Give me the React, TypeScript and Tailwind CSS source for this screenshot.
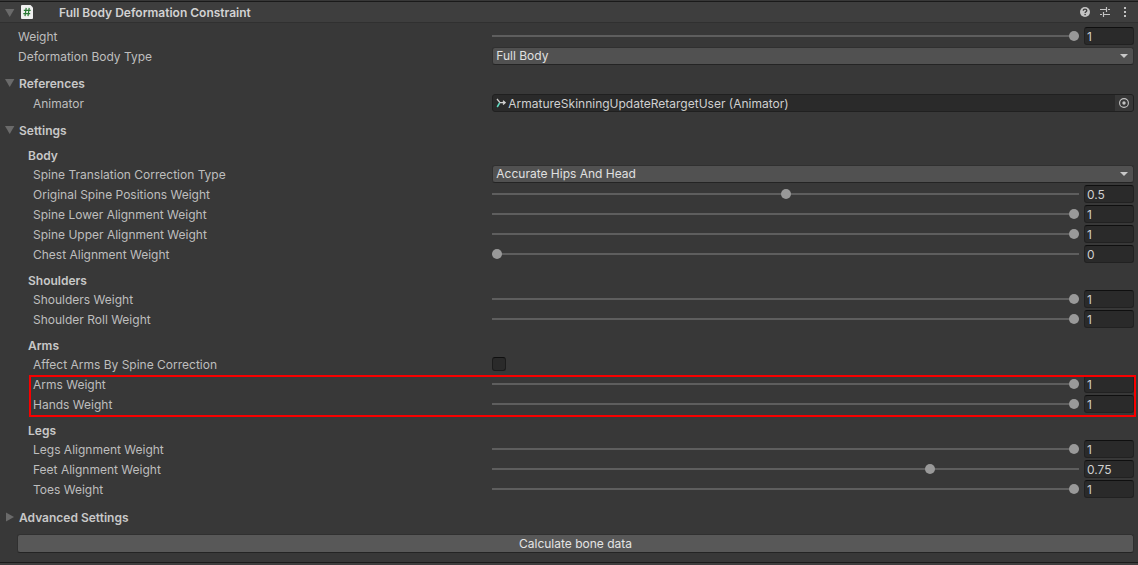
import { useState, type ReactNode } from "react";

const FIELD =
  "h-[18px] rounded-[3px] border border-[#212121] border-t-[#0f0f0f] bg-[#2a2a2a] text-[#d0d0d0] outline-none";

function Label({ id, top, children }: { id: string; top?: boolean; children: ReactNode }) {
  return (
    <label
      htmlFor={id}
      className={`w-[calc(45%-18px)] shrink-0 truncate pt-px leading-[18px] ${top ? "pl-[18px]" : "pl-[33px]"}`}
    >
      {children}
    </label>
  );
}

function Row({ children }: { children: ReactNode }) {
  return <div className="flex h-[18px] items-center pr-1">{children}</div>;
}

function SliderRow({ id, label, initial, top }: { id: string; label: string; initial: number; top?: boolean }) {
  const [value, setValue] = useState(String(initial));
  return (
    <Row>
      <Label id={id} top={top}>
        {label}
      </Label>
      <input
        type="range"
        aria-label={`${label} slider`}
        min={0}
        max={1}
        step={0.01}
        value={Number(value) || 0}
        onChange={(e) => setValue(e.target.value)}
        className="m-0 h-[18px] min-w-0 flex-1 appearance-none bg-transparent outline-none [&::-webkit-slider-runnable-track]:h-0.5 [&::-webkit-slider-runnable-track]:bg-[#5e5e5e] [&::-webkit-slider-thumb]:-mt-1 [&::-webkit-slider-thumb]:size-2.5 [&::-webkit-slider-thumb]:appearance-none [&::-webkit-slider-thumb]:rounded-full [&::-webkit-slider-thumb]:bg-[#999999]"
      />
      <input
        id={id}
        type="text"
        value={value}
        onChange={(e) => setValue(e.target.value)}
        className={`${FIELD} ml-[5px] w-[50px] px-0.5 pt-px`}
      />
    </Row>
  );
}

function SelectRow({ id, label, options, top }: { id: string; label: string; options: string[]; top?: boolean }) {
  return (
    <Row>
      <Label id={id} top={top}>
        {label}
      </Label>
      <div className="relative min-w-0 flex-1">
        <select
          id={id}
          className="block h-[18px] w-full appearance-none rounded-[3px] border border-[#303030] border-b-[#242424] bg-[#515151] pl-[3px] leading-4 text-[#e0e0e0] outline-none"
        >
          {options.map((o) => (
            <option key={o}>{o}</option>
          ))}
        </select>
        <svg className="pointer-events-none absolute top-[7px] right-1.5 h-1 w-2" viewBox="0 0 8 4" fill="#c9c9c9">
          <path d="M0 0h8L4 4z" />
        </svg>
      </div>
    </Row>
  );
}

function Triangle({ open }: { open: boolean }) {
  return (
    <svg className="size-2.5 shrink-0" viewBox="0 0 10 10" fill="#6a6a6a">
      <path d={open ? "M0 1h9.4L4.7 9z" : "M1 0.5v9L9 5z"} />
    </svg>
  );
}

function Foldout({ title, open, onToggle }: { title: string; open: boolean; onToggle: () => void }) {
  return (
    <button
      type="button"
      aria-expanded={open}
      onClick={onToggle}
      className="flex h-[18px] items-center gap-1 pl-[5px] font-semibold text-[#c8c8c8]"
    >
      <Triangle open={open} />
      <span className="pt-0.5">{title}</span>
    </button>
  );
}

function Group({ title, children }: { title: string; children: ReactNode }) {
  return (
    <section>
      <h3 className="h-[18px] pl-7 leading-[18px] font-semibold text-[#c8c8c8]">{title}</h3>
      <div className="flex flex-col gap-0.5">{children}</div>
    </section>
  );
}

function ScriptIcon() {
  return (
    <svg className="ml-1.5 h-3.5 w-3 shrink-0" viewBox="0 0 12 14">
      <path d="M1 0h8.5L12 2.5V13a1 1 0 0 1-1 1H1a1 1 0 0 1-1-1V1a1 1 0 0 1 1-1z" fill="#f0f0f0" />
      <path d="M5.2 2.8L4 11.2M8.2 2.8L7 11.2M2.8 5.4h6.9M2.3 8.6h6.9" stroke="#2b7a35" strokeWidth="1.2" fill="none" />
    </svg>
  );
}

function HeaderButton({ label, children }: { label: string; children: ReactNode }) {
  return (
    <button type="button" aria-label={label} className="flex size-5 items-center justify-center">
      {children}
    </button>
  );
}

export default function App() {
  const [expanded, setExpanded] = useState(true);
  const [references, setReferences] = useState(true);
  const [settings, setSettings] = useState(true);
  const [advanced, setAdvanced] = useState(false);

  return (
    <main className="min-h-screen bg-[#383838] font-['Inter',sans-serif] text-[12px] text-[#bebebe]">
      <div className="h-px bg-[#383838]" />
      <header className="flex h-[22px] items-center border-t border-b border-t-[#1a1a1a] border-b-[#303030] bg-[#3e3e3e] pr-[3px] pl-[5px]">
        <button
          type="button"
          aria-label="Toggle component"
          aria-expanded={expanded}
          onClick={() => setExpanded(!expanded)}
          className="pt-px"
        >
          <Triangle open={expanded} />
        </button>
        <ScriptIcon />
        <h2 className="ml-[26px] flex-1 truncate pt-0.5 font-semibold text-[#d2d2d2]">
          Full Body Deformation Constraint
        </h2>
        <HeaderButton label="Help">
          <svg className="size-2.5" viewBox="0 0 10 10">
            <circle cx="5" cy="5" r="5" fill="#c4c4c4" />
            <path
              d="M3.3 3.8C3.3 2.7 4 2.1 5 2.1s1.8.6 1.8 1.5c0 1.2-1.7 1.3-1.7 2.5"
              fill="none"
              stroke="#3e3e3e"
              strokeWidth="1.3"
            />
            <rect x="4.4" y="6.9" width="1.4" height="1.3" fill="#3e3e3e" />
          </svg>
        </HeaderButton>
        <HeaderButton label="Presets">
          <svg className="h-2.5 w-2.5" viewBox="0 0 10 10" fill="none" stroke="#c4c4c4">
            <path d="M0 2.5h6.5M6.5 0v5M8 2.5h2M0 7.5h2M3.5 5v5M3.5 7.5H10" strokeWidth="1.2" />
          </svg>
        </HeaderButton>
        <HeaderButton label="More options">
          <svg className="h-2.5 w-0.5" viewBox="0 0 2 10" fill="#c4c4c4">
            <path d="M0 0h2v2H0zM0 4h2v2H0zM0 8h2v2H0z" />
          </svg>
        </HeaderButton>
      </header>

      {expanded && (
        <div className="flex flex-col pt-1">
          <div className="flex flex-col gap-0.5">
            <SliderRow id="weight" label="Weight" initial={1} top />
            <SelectRow id="body-type" label="Deformation Body Type" options={["Full Body", "Upper Body"]} top />
          </div>

          <section className="mt-[9px] flex flex-col gap-0.5">
            <Foldout title="References" open={references} onToggle={() => setReferences(!references)} />
            {references && (
              <Row>
                <Label id="animator">Animator</Label>
                <div className="flex h-[18px] min-w-0 flex-1 items-center rounded-[3px] border border-[#202020] bg-[#2a2a2a]">
                  <svg className="ml-[3px] h-2.5 w-2.5 shrink-0" viewBox="0 0 10 10" fill="none">
                    <path d="M1 1l3 3.7h5.2M7 2.8l2.2 1.9L7 6.6" stroke="#d0d0d0" strokeWidth="1.3" />
                    <path d="M3.6 5L1.2 9" stroke="#5fd9c0" strokeWidth="1.5" />
                  </svg>
                  <input
                    id="animator"
                    type="text"
                    readOnly
                    value="ArmatureSkinningUpdateRetargetUser (Animator)"
                    className="ml-0.5 min-w-0 flex-1 bg-transparent pt-px text-[#d0d0d0] outline-none"
                  />
                  <button
                    type="button"
                    aria-label="Select object"
                    className="flex h-4 w-[18px] items-center justify-center rounded-r-[2px] bg-[#373737]"
                  >
                    <svg className="size-2.5" viewBox="0 0 10 10" fill="none">
                      <circle cx="5" cy="5" r="4.4" stroke="#c4c4c4" strokeWidth="1.1" />
                      <circle cx="5" cy="5" r="1.7" fill="#c4c4c4" />
                    </svg>
                  </button>
                </div>
              </Row>
            )}
          </section>

          <section className="mt-[9px] flex flex-col gap-2">
            <Foldout title="Settings" open={settings} onToggle={() => setSettings(!settings)} />
            {settings && (
              <div className="flex flex-col gap-[9px]">
                <Group title="Body">
                  <SelectRow
                    id="spine-correction"
                    label="Spine Translation Correction Type"
                    options={["Accurate Hips And Head", "Accurate Head", "Accurate Hips", "None"]}
                  />
                  <SliderRow id="spine-original" label="Original Spine Positions Weight" initial={0.5} />
                  <SliderRow id="spine-lower" label="Spine Lower Alignment Weight" initial={1} />
                  <SliderRow id="spine-upper" label="Spine Upper Alignment Weight" initial={1} />
                  <SliderRow id="chest" label="Chest Alignment Weight" initial={0} />
                </Group>
                <Group title="Shoulders">
                  <SliderRow id="shoulders" label="Shoulders Weight" initial={1} />
                  <SliderRow id="shoulder-roll" label="Shoulder Roll Weight" initial={1} />
                </Group>
                <Group title="Arms">
                  <Row>
                    <Label id="affect-arms">Affect Arms By Spine Correction</Label>
                    <input
                      id="affect-arms"
                      type="checkbox"
                      className="size-3.5 appearance-none rounded-[3px] border border-[#1c1c1c] border-t-[#0f0f0f] bg-[#2a2a2a] checked:bg-[#999999]"
                    />
                  </Row>
                  <div className="relative flex flex-col gap-0.5">
                    <SliderRow id="arms" label="Arms Weight" initial={1} />
                    <SliderRow id="hands" label="Hands Weight" initial={1} />
                    <div className="pointer-events-none absolute top-0 right-0.5 -bottom-1 left-[29px] border-2 border-[#f80000]" />
                  </div>
                </Group>
                <Group title="Legs">
                  <SliderRow id="legs" label="Legs Alignment Weight" initial={1} />
                  <SliderRow id="feet" label="Feet Alignment Weight" initial={0.75} />
                  <SliderRow id="toes" label="Toes Weight" initial={1} />
                </Group>
              </div>
            )}
          </section>

          <section className="mt-2.5">
            <Foldout title="Advanced Settings" open={advanced} onToggle={() => setAdvanced(!advanced)} />
          </section>

          <div className="mt-2 pr-1 pl-[17px]">
            <button
              type="button"
              className="block h-[19px] w-full rounded-[3px] border border-[#303030] border-b-[#242424] bg-[#585858] leading-[17px] text-[#e4e4e4]"
            >
              Calculate bone data
            </button>
          </div>
        </div>
      )}
      <div className="mt-[9px] h-px bg-[#1a1a1a]" />
      <div className="h-0.5 bg-[#3e3e3e]" />
    </main>
  );
}
